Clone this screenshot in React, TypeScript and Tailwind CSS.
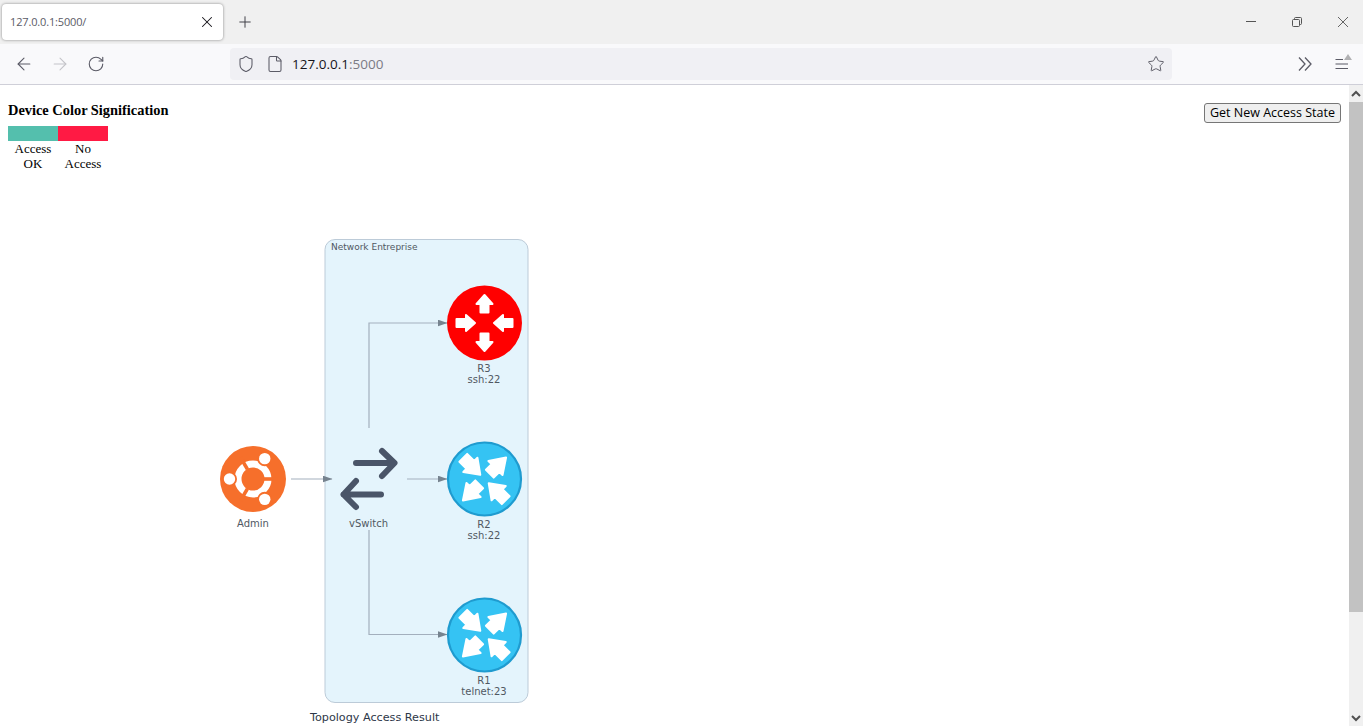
import { ArrowLeft, ArrowRight, File, Plus, RotateCw, Shield, Star, X } from "lucide-react";

// arrow shapes pointing up, away from the router centre
const RED_OUT = "M0 -28 L8 -19 L4 -19 L4 -10.5 L-4 -10.5 L-4 -19 L-8 -19 Z";
const RED_IN = "M0 -9.5 L8 -18.5 L4 -18.5 L4 -28 L-4 -28 L-4 -18.5 L-8 -18.5 Z";
const BLUE_OUT = "M0 -30.5 L10 -15.5 L5.5 -15.5 L5.5 -7.5 L-5.5 -7.5 L-5.5 -15.5 L-10 -15.5 Z";
const BLUE_IN = "M0 -6 L10 -20 L5.5 -20 L5.5 -30 L-5.5 -30 L-5.5 -20 L-10 -20 Z";

function RouterArrows({ down }: { down?: boolean }) {
  const out = down ? RED_OUT : BLUE_OUT;
  const inward = down ? RED_IN : BLUE_IN;
  return (
    <g transform={`rotate(${down ? 0 : 45})`} className="fill-white stroke-white" strokeWidth={2} strokeLinejoin="round">
      <path d={out} />
      <path d={inward} transform="rotate(90)" />
      <path d={out} transform="rotate(180)" />
      <path d={inward} transform="rotate(270)" />
    </g>
  );
}

function Router({ y, name, port, down }: { y: number; name: string; port: string; down?: boolean }) {
  return (
    <g>
      <g transform={`translate(484.5 ${y})`}>
        {down ? (
          <circle r={37.5} className="fill-[#ff0000]" />
        ) : (
          <circle r={36.5} strokeWidth={2.2} className="fill-[#35c3f3] stroke-[#1f9bcf]" />
        )}
        <RouterArrows down={down} />
      </g>
      <text x={484} y={y + 49} textAnchor="middle" className="fill-[#505862] text-[10px]">{name}</text>
      <text x={484} y={y + 60} textAnchor="middle" className="fill-[#505862] text-[10px]">{port}</text>
    </g>
  );
}

function Edge({ d }: { d: string }) {
  return <path d={d} fill="none" strokeWidth={1.2} markerEnd="url(#head)" className="stroke-[#a3afbd]" />;
}

function UbuntuLogo() {
  const dots = [-60, 60, 180].map((a) => ({
    x: 253 + 23.5 * Math.cos((a * Math.PI) / 180),
    y: 479 + 23.5 * Math.sin((a * Math.PI) / 180),
  }));
  return (
    <g>
      <circle cx={253} cy={479} r={33} className="fill-[#f66f2b]" />
      <circle cx={253} cy={479} r={15} fill="none" strokeWidth={7} className="stroke-white" />
      {[0, 120, 240].map((a) => (
        <rect key={a} x={264} y={477.2} width={14} height={3.6} transform={`rotate(${a} 253 479)`} className="fill-[#f66f2b]" />
      ))}
      {dots.map((p, i) => (
        <g key={i}>
          <circle cx={p.x} cy={p.y} r={7.5} className="fill-[#f66f2b]" />
          <circle cx={p.x} cy={p.y} r={5.7} className="fill-white" />
        </g>
      ))}
    </g>
  );
}

function Topology() {
  return (
    <svg
      viewBox="200 230 340 496"
      width={340}
      height={496}
      className="ml-[200px] mt-[59px] shrink-0 font-['DejaVu_Sans',sans-serif]"
    >
      <defs>
        <marker id="head" markerWidth="10" markerHeight="8" refX="9.5" refY="3.5" orient="auto" markerUnits="userSpaceOnUse">
          <path d="M0 0 L10 3.5 L0 7 Z" className="fill-[#76838f]" />
        </marker>
      </defs>

      <rect x={325} y={239.5} width={203} height={463} rx={10} strokeWidth={1} className="fill-[#e4f4fc] stroke-[#bccbd8]" />
      <text x={331} y={250} className="fill-[#505862] text-[9px]">Network Entreprise</text>

      <Edge d="M291 479 H332" />
      <Edge d="M407 479 H447" />
      <Edge d="M369 428 V323 H447" />
      <Edge d="M369 530 V634.5 H447" />

      <UbuntuLogo />
      <text x={253} y={527} textAnchor="middle" className="fill-[#505862] text-[10px]">Admin</text>

      <g fill="none" strokeWidth={6} strokeLinecap="round" strokeLinejoin="round" className="stroke-[#4a5568]">
        <path d="M356 463 H394 M382 451 L394.5 463 L382 476" />
        <path d="M381 494.5 H343.5 M356 481 L343.5 494.5 L356 507" />
      </g>
      <text x={368.5} y={527} textAnchor="middle" className="fill-[#505862] text-[10px]">vSwitch</text>

      <Router y={323} name="R3" port="ssh:22" down />
      <Router y={479} name="R2" port="ssh:22" />
      <Router y={635} name="R1" port="telnet:23" />

      <text x={310} y={721} className="fill-[#2d3748] text-[11.2px]">Topology Access Result</text>
    </svg>
  );
}

export default function App() {
  return (
    <div className="w-[1363px] h-[726px] flex flex-col overflow-hidden bg-white font-['Open_Sans',sans-serif]">
      {/* Tab strip */}
      <div className="h-[44px] shrink-0 flex items-start bg-[#f0f0f0] pt-[4px] pl-[2px]">
        <div className="w-[221px] h-[36px] flex items-center justify-between pl-[8px] pr-[7px] bg-white rounded-[4px] shadow-[0_0_3px_rgba(0,0,0,0.45)]">
          <span className="text-[11px] text-[#5b5b66] tracking-[-0.15px]">127.0.0.1:5000/</span>
          <X size={18} strokeWidth={1.4} className="text-[#15141a]" />
        </div>
        <div className="w-[44px] h-[36px] flex items-center justify-center">
          <Plus size={18} strokeWidth={1.3} className="text-[#3f3f46]" />
        </div>
        <div className="ml-auto h-[36px] flex items-center">
          <div className="w-[46px] flex justify-center">
            <svg width="12" height="12" viewBox="0 0 12 12" fill="none" stroke="#555" strokeWidth="1"><path d="M1 5.5 H11" /></svg>
          </div>
          <div className="w-[46px] flex justify-center">
            <svg width="12" height="12" viewBox="0 0 12 12" fill="none" stroke="#555" strokeWidth="1">
              <rect x="1.5" y="3.5" width="7" height="7" rx="1" />
              <path d="M3.5 3.5 V2.5 a1 1 0 0 1 1 -1 h5 a1 1 0 0 1 1 1 v5 a1 1 0 0 1 -1 1 h-1" />
            </svg>
          </div>
          <div className="w-[40px] ml-[3px] flex justify-center">
            <svg width="12" height="12" viewBox="0 0 12 12" fill="none" stroke="#555" strokeWidth="0.9"><path d="M1 1 L11 11 M11 1 L1 11" /></svg>
          </div>
        </div>
      </div>

      {/* Toolbar */}
      <div className="h-[41px] shrink-0 flex items-start pt-[4px] pl-[6px] bg-[#f9f9fb] border-b border-[#cfcfd8]">
        <div className="w-[36px] h-[32px] flex items-center justify-center"><ArrowLeft size={20} strokeWidth={1.3} className="text-[#5b5b66]" /></div>
        <div className="w-[36px] h-[32px] flex items-center justify-center"><ArrowRight size={20} strokeWidth={1.3} className="text-[#c4c4c9]" /></div>
        <div className="w-[36px] h-[32px] flex items-center justify-center"><RotateCw size={18} strokeWidth={1.5} className="text-[#5b5b66]" /></div>
        <div className="ml-[116px] w-[942px] h-[32px] flex items-center bg-[#f0f0f4] rounded-[4px] pl-[7px] pr-[7px]">
          <Shield size={18} strokeWidth={1.4} className="text-[#5b5b66]" />
          <File size={18} strokeWidth={1.4} className="ml-[11px] text-[#5b5b66]" />
          <span className="ml-[8px] text-[13.5px] text-[#15141a]">127.0.0.1<span className="text-[#7b7b84]">:5000</span></span>
          <Star size={18} strokeWidth={1.3} className="ml-auto text-[#5b5b66]" />
        </div>
        <div className="flex-1 h-[32px] flex items-center justify-end pr-[11px]">
          <svg width="14" height="16" viewBox="0 0 14 16" fill="none" stroke="#5b5b66" strokeWidth="1.3" className="mr-[22px]">
            <path d="M1 1.5 L7 8 L1 14.5 M7 1.5 L13 8 L7 14.5" />
          </svg>
          <svg width="18" height="20" viewBox="0 0 18 20" fill="none">
            <path d="M1.5 5.5 H9 M1.5 10 H14 M1.5 14.5 H14" stroke="#5b5b66" strokeWidth="1.2" />
            <path d="M14 0 L18 6 H10 Z" fill="#b1b1b3" />
          </svg>
        </div>
      </div>

      {/* Page + scrollbar */}
      <div className="flex-1 flex min-h-0">
        <main className="flex-1 min-w-0 flex flex-col overflow-hidden">
          <div className="flex items-start justify-between px-[8px] pt-[17px]">
            <div className="font-['Liberation_Serif',serif] text-black">
              <h2 className="text-[14.4px] leading-[17px] font-bold mb-[7px]">Device Color Signification</h2>
              <div className="grid grid-cols-2 w-[100px] text-[13px] leading-[15px] text-center">
                <div className="h-[15px] bg-[#54bfad]" />
                <div className="h-[15px] bg-[#ff1a44]" />
                <div>Access<br />OK</div>
                <div>No<br />Access</div>
              </div>
            </div>
            <button className="mt-[1px] w-[137px] h-[20px] flex items-center justify-center rounded-[3px] border border-[#767676] bg-[#efefef] text-[12.5px] text-black">
              Get New Access State
            </button>
          </div>
          <Topology />
        </main>

        <div className="w-[14px] shrink-0 flex flex-col bg-[#f0f0f0]">
          <div className="h-[17px] flex items-center justify-center">
            <svg width="10" height="8" viewBox="0 0 10 8" fill="none" stroke="#505050" strokeWidth="2"><path d="M1 6 L5 2 L9 6" /></svg>
          </div>
          <div className="h-[510px] bg-[#c2c2c2]" />
          <div className="flex-1" />
          <div className="h-[17px] flex items-center justify-center">
            <svg width="10" height="8" viewBox="0 0 10 8" fill="none" stroke="#505050" strokeWidth="2"><path d="M1 2 L5 6 L9 2" /></svg>
          </div>
        </div>
      </div>
    </div>
  );
}
